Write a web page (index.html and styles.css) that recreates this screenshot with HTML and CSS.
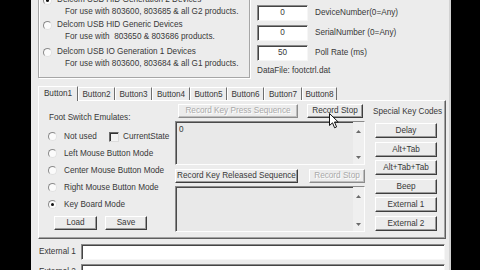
FILE: index.html
```html
<!DOCTYPE html>
<html>
<head>
<meta charset="utf-8">
<link rel="stylesheet" href="styles.css">
</head>
<body>
<div class="dialog">
  <div class="top">
    <div class="group">
      <div class="opt">
        <span class="radio on"></span><span>Delcom USB HID Generation 2 Devices</span>
        <span class="sub">For use with 803600, 803685 &amp; all G2 products.</span>
      </div>
      <div class="opt opt2">
        <span class="radio"></span><span>Delcom USB HID Generic Devices</span>
        <span class="sub">For use with &nbsp;803650 &amp; 803686 products.</span>
      </div>
      <div class="opt opt3">
        <span class="radio"></span><span>Delcom USB IO Generation 1 Devices</span>
        <span class="sub">For use with 803600, 803684 &amp; all G1 products.</span>
      </div>
    </div>
    <div class="settings">
      <div class="srow"><div class="num">0</div><span>DeviceNumber(0=Any)</span></div>
      <div class="srow"><div class="num">0</div><span>SerialNumber (0=Any)</span></div>
      <div class="srow"><div class="num">50</div><span>Poll Rate (ms)</span></div>
      <div class="datafile">DataFile: footctrl.dat</div>
    </div>
  </div>

  <div class="tabs">
    <div class="tabrow">
      <div class="tab sel w40">Button1</div>
      <div class="tab">Button2</div>
      <div class="tab">Button3</div>
      <div class="tab w38">Button4</div>
      <div class="tab">Button5</div>
      <div class="tab">Button6</div>
      <div class="tab w38">Button7</div>
      <div class="tab w35">Button8</div>
    </div>
    <div class="panel">
      <div class="left">
        <div class="title">Foot Switch Emulates:</div>
        <div class="rlist">
          <div class="rrow"><span class="radio"></span><span class="notused">Not used</span><span class="check"></span><span>CurrentState</span></div>
          <div class="rrow"><span class="radio"></span><span>Left Mouse Button Mode</span></div>
          <div class="rrow"><span class="radio"></span><span>Center Mouse Button Mode</span></div>
          <div class="rrow"><span class="radio"></span><span>Right Mouse Button Mode</span></div>
          <div class="rrow"><span class="radio on"></span><span>Key Board Mode</span></div>
        </div>
        <div class="lsbtns">
          <div class="btn load">Load</div>
          <div class="btn save">Save</div>
        </div>
      </div>

      <div class="mid">
        <div class="brow">
          <div class="btn dis press">Record Key Press Sequence</div>
          <div class="btn stop1">Record Stop</div>
        </div>
        <div class="ta ta1">
          <span class="tatext">0</span>
          <div class="sb">
            <svg width="5" height="3" viewBox="0 0 5 3"><path d="M0 3 L2.5 0 L5 3 Z" fill="#6a6a6a"/></svg>
            <svg width="5" height="3" viewBox="0 0 5 3"><path d="M0 0 L2.5 3 L5 0 Z" fill="#6a6a6a"/></svg>
          </div>
        </div>
        <div class="brow brow2">
          <div class="btn released">Record Key Released Sequence</div>
          <div class="btn dis stop2">Record Stop</div>
        </div>
        <div class="ta ta2">
          <span class="tatext"></span>
          <div class="sb">
            <svg width="5" height="3" viewBox="0 0 5 3"><path d="M0 3 L2.5 0 L5 3 Z" fill="#6a6a6a"/></svg>
            <svg width="5" height="3" viewBox="0 0 5 3"><path d="M0 0 L2.5 3 L5 0 Z" fill="#6a6a6a"/></svg>
          </div>
        </div>
      </div>

      <div class="right">
        <div class="title">Special Key Codes</div>
        <div class="keys">
          <div class="btn key">Delay</div>
          <div class="btn key">Alt+Tab</div>
          <div class="btn key">Alt+Tab+Tab</div>
          <div class="btn key">Beep</div>
          <div class="btn key">External 1</div>
          <div class="btn key">External 2</div>
        </div>
      </div>
    </div>
  </div>

  <div class="ext">
    <div class="erow"><span class="elabel">External 1</span><div class="etext"></div></div>
    <div class="erow"><span class="elabel">External 2</span><div class="etext"></div></div>
  </div>
</div>

<svg class="cursor" width="11" height="17" viewBox="0 0 11 17">
  <path d="M0.5 0.5 L0.5 12.5 L3.5 9.8 L5.6 14.8 L7.6 13.9 L5.5 9 L9.2 9 Z" fill="#fff" stroke="#111" stroke-width="1"/>
</svg>
</body>
</html>
```

FILE: styles.css
```css
* { box-sizing: border-box; }

body {
  margin: 0;
  width: 480px;
  height: 270px;
  overflow: hidden;
  background: #000;
  position: relative;
  font-family: "Liberation Sans", Arial, sans-serif;
  font-size: 8.2px;
  line-height: 12px;
  color: #383838;
}

.dialog {
  margin-left: 31px;
  width: 420px;
  height: 300px;
  background: #ececec;
  border-right: 2px solid #d2d2d2;
  padding-left: 7px;
}

/* ---------- top area ---------- */
.top {
  display: flex;
  margin-top: -16px;
}

.group {
  width: 212px;
  height: 94px;
  border: 1px solid #a6a6a6;
  box-shadow: inset 1px 1px 0 #fff, 1px 1px 0 #fff;
  padding: 9px 0 0 4px;
}

.opt {
  display: grid;
  grid-template-columns: 14px auto;
  align-items: center;
  line-height: 12px;
  white-space: nowrap;
}
.opt2 { margin-top: 1px; }
.opt3 { margin-top: 3px; }
.sub { grid-column: 2; padding-left: 8px; }

.radio {
  display: inline-block;
  width: 9px;
  height: 9px;
  border-radius: 50%;
  border: 1px solid;
  border-color: #8a8a8a #e2e2e2 #e2e2e2 #8a8a8a;
  background: #fbfbfb;
  position: relative;
  flex: none;
}
.radio.on::after {
  content: "";
  position: absolute;
  left: 2px;
  top: 2px;
  width: 3px;
  height: 3px;
  border-radius: 50%;
  background: #111;
}

.settings {
  margin-left: 7px;
  padding-top: 21px;
}
.srow {
  display: flex;
  align-items: center;
  gap: 7px;
  height: 16px;
  margin-bottom: 4px;
  white-space: nowrap;
}
.num {
  width: 51px;
  height: 16px;
  background: #fff;
  border: 1px solid;
  border-color: #8a8a8a #f6f6f6 #f6f6f6 #8a8a8a;
  box-shadow: inset 1px 1px 0 #444;
  text-align: center;
  line-height: 14px;
}
.datafile {
  margin-top: 1px;
  white-space: nowrap;
}

/* ---------- tabs ---------- */
.tabs {
  margin-top: 9px;
  width: 408px;
}
.tabrow {
  display: flex;
  align-items: flex-end;
  height: 13px;
  position: relative;
  z-index: 1;
}
.tab {
  flex: 0 0 37px;
  height: 13px;
  border-top: 1px solid #fff;
  border-left: 1px solid #fff;
  border-right: 1px solid #6e6e6e;
  text-align: center;
  line-height: 13px;
  white-space: nowrap;
}
.tab.w38 { flex-basis: 38px; }
.tab.w35 { flex-basis: 35px; }
.tab.w40 { flex-basis: 40px; }
.tab.sel {
  height: 15px;
  margin-bottom: -1px;
  background: #ececec;
  line-height: 14px;
}

.panel {
  display: flex;
  height: 139px;
  border: 1px solid;
  border-color: #fff #5e5e5e #5e5e5e #fff;
  box-shadow: inset -1px -1px 0 #a2a2a2;
}

.left {
  width: 136px;
  padding: 11px 0 0 9px;
}
.title {
  line-height: 12px;
  margin-left: 1px;
  white-space: nowrap;
}
.rlist { margin-top: 4px; }
.rrow {
  display: flex;
  align-items: center;
  height: 17px;
  white-space: nowrap;
}
.rrow .radio { margin-right: 7px; }
.notused { width: 45px; }
.check {
  width: 10px;
  height: 10px;
  border: 1px solid;
  border-color: #6a6a6a #dcdcdc #dcdcdc #6a6a6a;
  box-shadow: inset 1px 1px 0 #333;
  background: #f4f4f4;
  margin-right: 4px;
}
.lsbtns {
  display: flex;
  gap: 8px;
  margin: 3px 0 0 6px;
}

.btn {
  height: 14px;
  border: 1px solid;
  border-color: #fff #3e3e3e #3e3e3e #fff;
  box-shadow: inset -1px -1px 0 #9c9c9c;
  background: #ececec;
  text-align: center;
  line-height: 12px;
  white-space: nowrap;
}
.btn.dis {
  color: #a9a9a9;
  text-shadow: 1px 1px 0 #fff;
  border-color: #fff #8c8c8c #8c8c8c #fff;
  box-shadow: inset -1px -1px 0 #bdbdbd;
}
.load { width: 43px; }
.save { width: 42px; }

.mid {
  width: 190px;
  padding-top: 3px;
}
.brow {
  display: flex;
  height: 14px;
}
.press { width: 120px; margin-left: 3px; }
.stop1 { width: 56px; margin-left: 9px; }
.brow2 { margin-top: 4px; }
.released { width: 123px; }
.stop2 { width: 56px; margin-left: 11px; }

.ta {
  display: flex;
  border: 1px solid;
  border-color: #8a8a8a #fdfdfd #fdfdfd #8a8a8a;
  box-shadow: inset 1px 1px 0 #4a4a4a;
  background: #e9e9e9;
  margin-top: 3px;
}
.ta1 { height: 44px; }
.ta2 { height: 46px; }
.tatext {
  padding: 2px 0 0 3px;
  line-height: 12px;
}
.sb {
  margin-left: auto;
  width: 11px;
  display: flex;
  flex-direction: column;
  justify-content: space-between;
  align-items: center;
  padding: 8px 0 5px;
  background: #efefef;
}

.right {
  margin-left: 7px;
  padding-top: 5px;
}
.keys {
  display: flex;
  flex-direction: column;
  gap: 3.6px;
  margin: 5px 0 0 3px;
}
.key {
  width: 62px;
  height: 15px;
  line-height: 13px;
}

/* ---------- external rows ---------- */
.ext { margin-top: 5px; width: 408px; }
.erow {
  display: flex;
  align-items: center;
  height: 16px;
  margin-bottom: 4px;
}
.elabel {
  width: 43px;
  padding-left: 1px;
  white-space: nowrap;
}
.etext {
  flex: 1;
  height: 16px;
  margin-right: 1px;
  background: #fff;
  border: 1px solid;
  border-color: #8a8a8a #f6f6f6 #f6f6f6 #8a8a8a;
  box-shadow: inset 1px 1px 0 #444;
}

.cursor {
  position: absolute;
  left: 329px;
  top: 113px;
}
```
